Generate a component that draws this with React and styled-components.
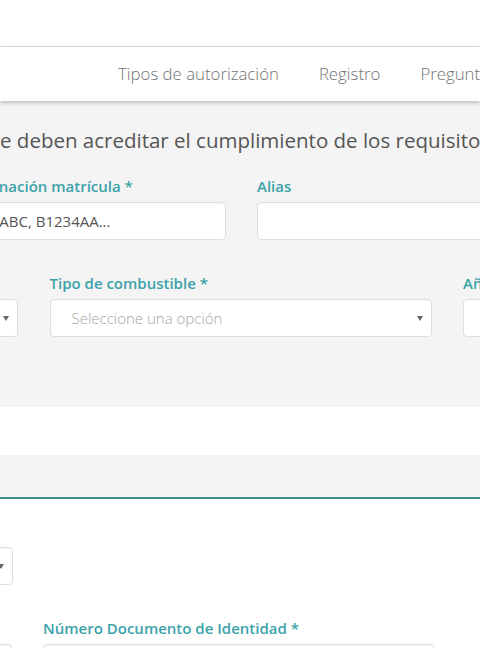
import React from "react";
import styled, { createGlobalStyle } from "styled-components";

const GlobalStyle = createGlobalStyle`
  html, body { margin: 0; padding: 0; background: #fff; }
  body { font-family: "Open Sans", "Noto Sans", sans-serif; overflow: hidden; }
  * { box-sizing: border-box; }
`;

const Page = styled.div`
  width: 480px;
  height: 648px;
  overflow: hidden;
  position: relative;
`;

const TopBar = styled.div`
  height: 47px;
  background: #fff;
  border-bottom: 1px solid #dcdcdc;
`;

const NavBar = styled.nav`
  height: 54px;
  background: #fff;
  display: flex;
  align-items: center;
  padding-left: 98px;
  box-shadow: 0 2px 4px rgba(0, 0, 0, 0.22);
  position: relative;
  z-index: 2;
`;

const NavLink = styled.a`
  padding: 0 20px;
  font-size: 16.8px;
  font-weight: 300;
  color: #727272;
  white-space: nowrap;
  text-decoration: none;
  line-height: 22px;
`;

const GraySection = styled.section`
  background: #f4f4f4;
  height: 306px;
  padding-top: 25px;
  overflow: hidden;
`;

const Heading = styled.h2`
  margin: 0 0 22px 0;
  font-size: 20.5px;
  font-weight: 400;
  line-height: 28px;
  color: #555;
  white-space: nowrap;
`;

const Row = styled.div`
  display: grid;
  grid-template-columns: ${(p) => p.$cols};
  column-gap: ${(p) => p.$gap || 31}px;
  margin-left: ${(p) => p.$offset}px;
  margin-bottom: ${(p) => p.$mb || 0}px;
`;

const Field = styled.div`
  display: flex;
  flex-direction: column;
  min-width: 0;
`;

const Label = styled.label`
  font-size: 15px;
  font-weight: 600;
  line-height: 20px;
  color: #3ba2a9;
  margin-bottom: 6px;
  white-space: nowrap;
  min-height: 20px;
`;

const Input = styled.div`
  height: 38px;
  background: #fff;
  border: 1px solid #dedede;
  border-radius: 4px;
  box-shadow: inset 0 1px 1px rgba(0, 0, 0, 0.03);
  display: flex;
  align-items: center;
  padding: 0 ${(p) => p.$pad || 21}px;
  font-size: 15px;
  color: ${(p) => (p.$muted ? "#a6a6a6" : "#555")};
  font-weight: ${(p) => (p.$muted ? 300 : 400)};
  white-space: nowrap;
  overflow: hidden;
  position: relative;
`;

const Arrow = styled.span`
  position: absolute;
  right: 8px;
  top: 50%;
  margin-top: -2px;
  width: 0;
  height: 0;
  border-left: 3.5px solid transparent;
  border-right: 3.5px solid transparent;
  border-top: 5px solid #666;
`;

const Spacer = styled.div`
  height: ${(p) => p.$h}px;
  background: #fff;
`;

const TabHeader = styled.div`
  height: 44px;
  background: #f4f4f4;
  border-bottom: 2px solid #3e8d92;
  box-shadow: 0 1px 0 #d9f7f7;
`;

const WhiteSection = styled.section`
  background: #fff;
  padding-top: 48px;
`;

export default function App() {
  return (
    <Page>
      <GlobalStyle />
      <TopBar />
      <NavBar>
        <NavLink>Tipos de autorización</NavLink>
        <NavLink>Registro</NavLink>
        <NavLink>Preguntas frecuentes</NavLink>
      </NavBar>
      <GraySection>
        <Heading>e deben acreditar el cumplimiento de los requisitos</Heading>
        <Row $cols="284px 382px" $offset={-58} $mb={33}>
          <Field>
            <Label>Denominación matrícula *</Label>
            <Input $pad={22}>1234ABC, B1234AA...</Input>
          </Field>
          <Field>
            <Label>Alias</Label>
            <Input />
          </Field>
        </Row>
        <Row $cols="382px 382px 382px" $offset={-364} $gap={31.5}>
          <Field>
            <Label>Tipo de vehículo *</Label>
            <Input $muted>
              Seleccione una opción
              <Arrow />
            </Input>
          </Field>
          <Field>
            <Label>Tipo de combustible *</Label>
            <Input $muted>
              Seleccione una opción
              <Arrow />
            </Input>
          </Field>
          <Field>
            <Label>Año de matriculación *</Label>
            <Input />
          </Field>
        </Row>
      </GraySection>
      <Spacer $h={48} />
      <TabHeader />
      <WhiteSection>
        <Row $cols="382px" $offset={-369} $mb={33}>
          <Field>
            <Input $muted>
              Seleccione una opción
              <Arrow />
            </Input>
          </Field>
        </Row>
        <Row $cols="382px 392px" $offset={-370}>
          <Field>
            <Label>Tipo Documento de Identidad *</Label>
            <Input />
          </Field>
          <Field>
            <Label>Número Documento de Identidad *</Label>
            <Input />
          </Field>
        </Row>
      </WhiteSection>
    </Page>
  );
}
